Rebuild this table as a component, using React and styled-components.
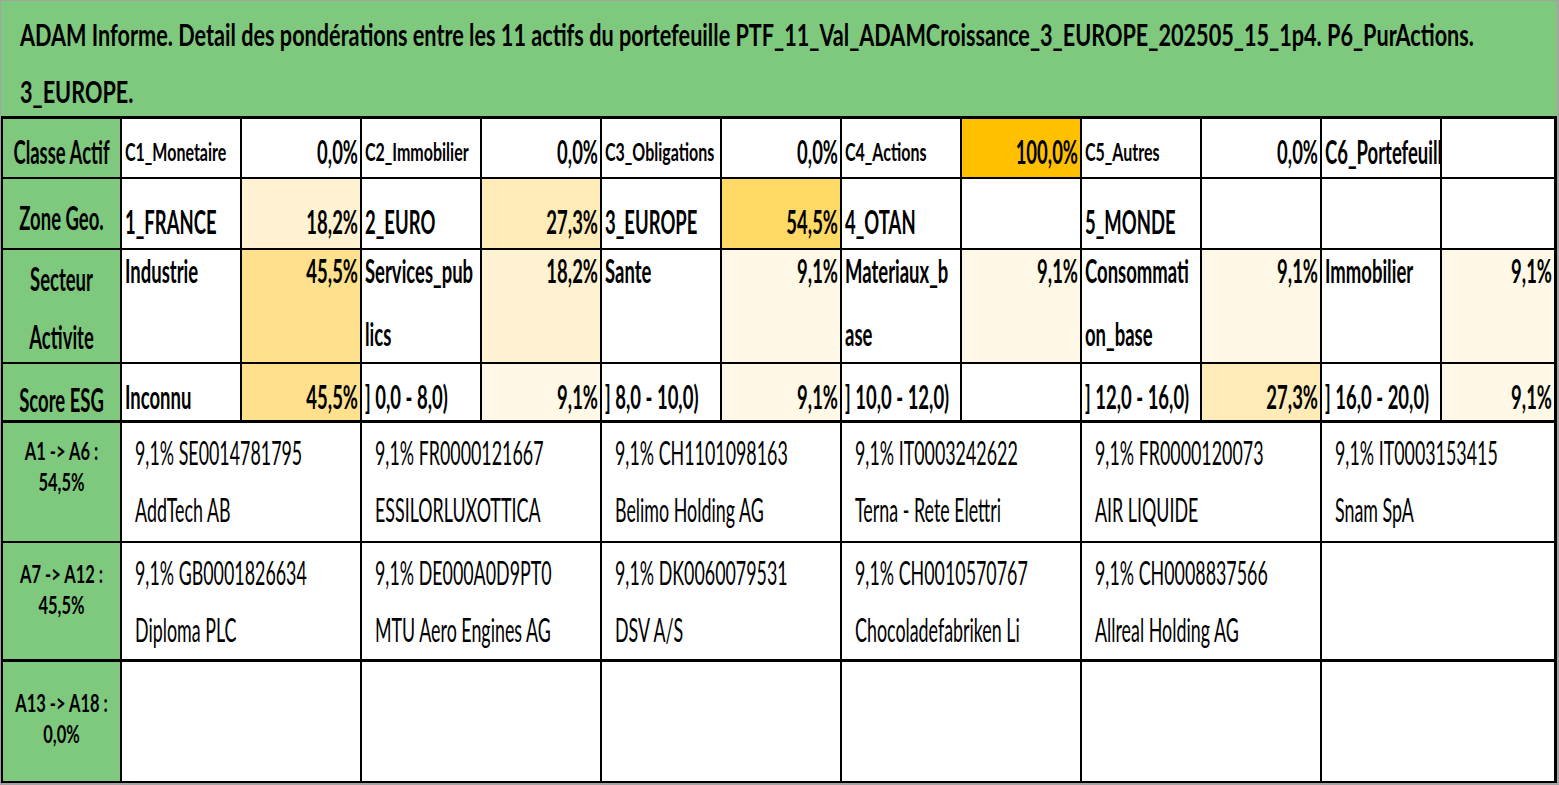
import React from "react";
import styled, { createGlobalStyle } from "styled-components";

// the sheet was captured squeezed sideways: each text line is laid out wide, then narrowed by $sx
const GREEN = "#7fc97f";
const BG = {
  c100: "#ffc000",
  y54: "#ffd966",
  y45: "#ffe08c",
  y27: "#ffebb8",
  y18: "#fff2d3",
  y9: "#fff8e6",
};

const TYPE = {
  title: { size: 30, sx: 0.722, weight: 700 },
  head: { size: 33, sx: 0.56, weight: 700 },
  small: { size: 25, sx: 0.64, weight: 700 },
  body: { size: 32, sx: 0.558, weight: 400 },
  tag: { size: 25, sx: 0.66, weight: 700 },
};

const GlobalStyle = createGlobalStyle`
  html, body { margin: 0; padding: 0; background: #fff; }
  body { font-family: Lato, "Liberation Sans", sans-serif; color: #000; }
`;

const Frame = styled.div`
  width: 1559px;
  height: 785px;
  box-sizing: border-box;
  border-style: solid;
  border-color: #a3a3a3;
  border-width: 1px 2px 2px 1px;
  display: flex;
  flex-direction: column;
  overflow: hidden;
`;

const Title = styled.header`
  flex: none;
  height: 115px;
  box-sizing: border-box;
  background: ${GREEN};
  padding: 15px 0 0 19px;
  display: flex;
  flex-direction: column;
  gap: 21px;
  font-weight: 700;
  font-size: ${TYPE.title.size}px;
  line-height: 36px;
`;

const Squeeze = styled.div`
  flex: none;
  width: calc(100% / ${(p) => p.$sx});
  transform: scaleX(${(p) => p.$sx});
  transform-origin: left top;
  text-align: ${(p) => p.$align || "left"};
  white-space: nowrap;
`;

const Sheet = styled.div`
  flex: 1;
  display: flex;
  flex-direction: column;
  gap: 3px;
  background: #000;
  border-style: solid;
  border-color: #000;
  border-width: 3px 3px 2px 2px;
`;

const Grid = styled.div`
  flex: ${(p) => (p.$grow ? 1 : "none")};
  display: grid;
  grid-template-columns: 117px repeat(11, 118px) 1fr;
  grid-template-rows: ${(p) => p.$rows};
  gap: 2px;
`;

const Label = styled.div`
  background: ${GREEN};
  display: flex;
  flex-direction: column;
  justify-content: ${(p) => (p.$top ? "flex-start" : "center")};
  gap: ${(p) => p.$gap || 0}px;
  padding: ${(p) => p.$pad || "0"};
  font-weight: 700;
  font-size: ${(p) => p.$type.size}px;
  line-height: ${(p) => p.$lh || 36}px;
  overflow: hidden;
`;

const Cell = styled.div`
  grid-column: span ${(p) => p.$span || 1};
  background: ${(p) => p.$bg || "#fff"};
  display: flex;
  flex-direction: column;
  justify-content: ${(p) => p.$valign || "flex-start"};
  gap: ${(p) => p.$gap || 0}px;
  padding: ${(p) => p.$pad || "0"};
  font-weight: ${(p) => p.$type.weight};
  font-size: ${(p) => p.$type.size}px;
  line-height: 36px;
  overflow: hidden;
`;

const TOP = [
  {
    h: 58,
    label: ["Classe Actif"],
    labelPad: "6px 0 0",
    valign: "flex-end",
    pad: "0 2px 8px 3px",
    names: [
      [["C1_Monetaire"], "small"],
      [["C2_Immobilier"], "small"],
      [["C3_Obligations"], "small"],
      [["C4_Actions"], "small"],
      [["C5_Autres"], "small"],
      [["C6_Portefeuille"], "head"],
    ],
    pcts: [["0,0%"], ["0,0%"], ["0,0%"], ["100,0%", "c100"], ["0,0%"], [""]],
  },
  {
    h: 69,
    label: ["Zone Geo."],
    labelPad: "6px 0 0",
    valign: "flex-end",
    pad: "0 2px 9px 3px",
    names: [[["1_FRANCE"]], [["2_EURO"]], [["3_EUROPE"]], [["4_OTAN"]], [["5_MONDE"]], [[""]]],
    pcts: [["18,2%", "y18"], ["27,3%", "y27"], ["54,5%", "y54"], [""], [""], [""]],
  },
  {
    h: 112,
    label: ["Secteur", "Activite"],
    labelPad: "2px 0 0",
    labelGap: 22,
    valign: "flex-start",
    gap: 27,
    pad: "2px 2px 0 3px",
    names: [
      [["Industrie"]],
      [["Services_pub", "lics"]],
      [["Sante"]],
      [["Materiaux_b", "ase"]],
      [["Consommati", "on_base"]],
      [["Immobilier"]],
    ],
    pcts: [["45,5%", "y45"], ["18,2%", "y18"], ["9,1%", "y9"], ["9,1%", "y9"], ["9,1%", "y9"], ["9,1%", "y9"]],
  },
  {
    h: 56,
    label: ["Score ESG"],
    labelPad: "14px 0 0",
    valign: "flex-end",
    pad: "0 2px 6px 3px",
    names: [
      [["Inconnu"]],
      [["] 0,0 - 8,0)"]],
      [["] 8,0 - 10,0)"]],
      [["] 10,0 - 12,0)"]],
      [["] 12,0 - 16,0)"]],
      [["] 16,0 - 20,0)"]],
    ],
    pcts: [["45,5%", "y45"], ["9,1%", "y9"], ["9,1%", "y9"], [""], ["27,3%", "y27"], ["9,1%", "y9"]],
  },
];

const ASSETS = [
  {
    label: ["A1 -> A6 :", "54,5%"],
    pt: 12,
    items: [
      ["9,1% SE0014781795", "AddTech AB"],
      ["9,1% FR0000121667", "ESSILORLUXOTTICA"],
      ["9,1% CH1101098163", "Belimo Holding AG"],
      ["9,1% IT0003242622", "Terna - Rete Elettri"],
      ["9,1% FR0000120073", "AIR LIQUIDE"],
      ["9,1% IT0003153415", "Snam SpA"],
    ],
  },
  {
    label: ["A7 -> A12 :", "45,5%"],
    pt: 15,
    items: [
      ["9,1% GB0001826634", "Diploma PLC"],
      ["9,1% DE000A0D9PT0", "MTU Aero Engines AG"],
      ["9,1% DK0060079531", "DSV A/S"],
      ["9,1% CH0010570767", "Chocoladefabriken Li"],
      ["9,1% CH0008837566", "Allreal Holding AG"],
      [],
    ],
  },
  {
    label: ["A13 -> A18 :", "0,0%"],
    pt: 25,
    items: [[], [], [], [], [], []],
  },
];

const Lines = ({ lines, align, type }) =>
  lines.map((l, i) => (
    <Squeeze key={i} $align={align} $sx={type.sx}>
      {l}
    </Squeeze>
  ));

const TopRow = ({ row }) => (
  <>
    <Label $type={TYPE.head} $pad={row.labelPad} $gap={row.labelGap}>
      <Lines lines={row.label} align="center" type={TYPE.head} />
    </Label>
    {row.names.map(([name, kind], i) => {
      const [pct, bg] = row.pcts[i];
      const type = TYPE[kind || "head"];
      return (
        <React.Fragment key={i}>
          <Cell $type={type} $valign={row.valign} $gap={row.gap} $pad={row.pad}>
            <Lines lines={name} type={type} />
          </Cell>
          <Cell $type={TYPE.head} $valign={row.valign} $pad={row.pad} $bg={BG[bg]}>
            <Lines lines={[pct]} align="right" type={TYPE.head} />
          </Cell>
        </React.Fragment>
      );
    })}
  </>
);

const AssetRow = ({ row }) => (
  <>
    <Label $type={TYPE.tag} $top $pad={`${row.pt}px 0 0`} $lh={30} $gap={1}>
      <Lines lines={row.label} align="center" type={TYPE.tag} />
    </Label>
    {row.items.map((item, i) => (
      <Cell key={i} $type={TYPE.body} $span={2} $gap={21} $pad="12px 4px 0 13px">
        <Lines lines={item} type={TYPE.body} />
      </Cell>
    ))}
  </>
);

export default function App() {
  return (
    <>
      <GlobalStyle />
      <Frame>
        <Title>
          <Squeeze $sx={TYPE.title.sx}>
            ADAM Informe. Detail des pondérations entre les 11 actifs du portefeuille
            PTF_11_Val_ADAMCroissance_3_EUROPE_202505_15_1p4. P6_PurActions.
          </Squeeze>
          <Squeeze $sx={TYPE.title.sx}>3_EUROPE.</Squeeze>
        </Title>
        <Sheet>
          <Grid $rows={TOP.map((r) => `${r.h}px`).join(" ")}>
            {TOP.map((row, i) => (
              <TopRow key={i} row={row} />
            ))}
          </Grid>
          <Grid $rows="118px 116px">
            {ASSETS.slice(0, 2).map((row, i) => (
              <AssetRow key={i} row={row} />
            ))}
          </Grid>
          <Grid $rows="1fr" $grow>
            <AssetRow row={ASSETS[2]} />
          </Grid>
        </Sheet>
      </Frame>
    </>
  );
}
